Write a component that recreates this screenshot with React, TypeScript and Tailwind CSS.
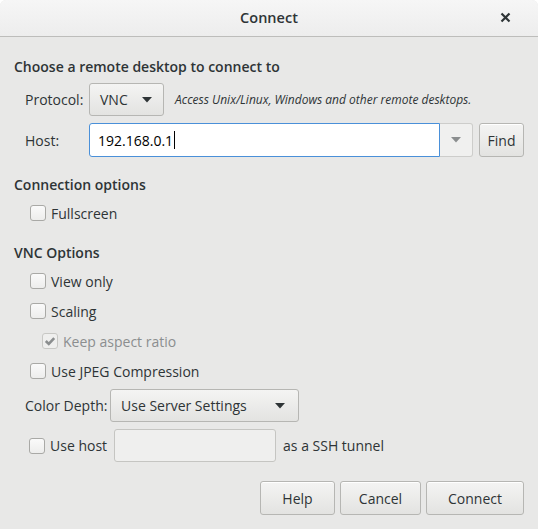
import React from "react";

const font = { fontFamily: '"Open Sans", "Noto Sans", sans-serif' };

function Check({ checked, disabled, label }: { checked?: boolean; disabled?: boolean; label: string }) {
  return (
    <div className={`flex items-center h-[30px] ${disabled ? "text-[#8b8e8f]" : "text-[#2e3436]"}`}>
      <div
        className={`w-[16px] h-[16px] rounded-[3px] border flex items-center justify-center ${
          disabled ? "border-[#c8c8c5] bg-[#efefee]" : "border-[#a9a9a6] bg-gradient-to-b from-[#fafafa] to-[#ededec]"
        }`}
      >
        {checked && (
          <svg width="12" height="12" viewBox="0 0 12 12">
            <path d="M1.8 6 L4.8 9 L10.2 3.2" stroke={disabled ? "#8b8e8f" : "#2e3436"} strokeWidth="2.6" fill="none" />
          </svg>
        )}
      </div>
      <span className="ml-[5px] text-[14px]">{label}</span>
    </div>
  );
}

function Caret() {
  return (
    <svg width="10" height="6" viewBox="0 0 10 6">
      <path d="M0 0 H10 L5 5.5 Z" fill="#2e3436" />
    </svg>
  );
}

function Btn({ children, w }: { children: React.ReactNode; w: string }) {
  return (
    <div
      className={`${w} h-[34px] rounded-[3px] border border-[#b6b6b3] bg-gradient-to-b from-[#f4f4f3] to-[#e3e3e1] shadow-[inset_0_1px_0_#ffffff] flex items-center justify-center text-[14px] text-[#2e3436]`}
    >
      {children}
    </div>
  );
}

export default function App() {
  return (
    <div style={font} className="w-[538px] h-[529px] bg-[#e8e8e7] flex flex-col text-[#2e3436] rounded-t-[6px] overflow-hidden">
      <div className="h-[37px] shrink-0 bg-gradient-to-b from-[#f6f6f6] to-[#ededed] border-b border-[#bdbdbb] flex items-center relative">
        <div className="flex-1 text-center text-[14.5px] font-semibold text-[#2e3436]">Connect</div>
        <div className="absolute right-[27px] top-[12px]">
          <svg width="11" height="11" viewBox="0 0 11 11">
            <path d="M1.5 1.5 L9.5 9.5 M9.5 1.5 L1.5 9.5" stroke="#2e3436" strokeWidth="2.2" />
          </svg>
        </div>
      </div>

      <div className="flex flex-col pl-[14px] pr-[14px]">
        <div className="mt-[20px] h-[20px] leading-[20px] text-[14px] font-semibold">Choose a remote desktop to connect to</div>

        <div className="mt-[6px] flex items-center h-[33px]">
          <span className="ml-[11px] w-[64px] text-[14px]">Protocol:</span>
          <div className="w-[75px] h-[33px] rounded-[3px] border border-[#b6b6b3] bg-gradient-to-b from-[#f4f4f3] to-[#e3e3e1] flex items-center justify-between pl-[10px] pr-[11px] text-[14px]">
            <span>VNC</span>
            <Caret />
          </div>
          <span className="ml-[11px] text-[12px] italic text-[#2e3436]">Access Unix/Linux, Windows and other remote desktops.</span>
        </div>

        <div className="mt-[7px] flex items-center h-[34px]">
          <span className="ml-[11px] w-[64px] text-[14px]">Host:</span>
          <div className="w-[351px] h-[34px] rounded-l-[3px] border border-[#4a90d9] bg-white flex items-center pl-[8px] text-[14px] text-black">
            192.168.0.1<span className="w-px h-[18px] bg-black ml-px" />
          </div>
          <div className="w-[33px] h-[34px] rounded-r-[3px] border border-l-0 border-[#cdcdcb] bg-[#f0f0ef] flex items-center justify-center">
            <svg width="10" height="6" viewBox="0 0 10 6">
              <path d="M0 0 H10 L5 5.5 Z" fill="#8b8e8f" />
            </svg>
          </div>
          <div className="ml-[6px]">
            <Btn w="w-[45px]">Find</Btn>
          </div>
        </div>

        <div className="mt-[18px] h-[20px] leading-[20px] text-[14px] font-semibold">Connection options</div>
        <div className="mt-[3px] pl-[16px]">
          <Check label="Fullscreen" />
        </div>

        <div className="mt-[15px] h-[20px] leading-[20px] text-[14px] font-semibold">VNC Options</div>
        <div className="mt-[3px] pl-[16px] flex flex-col">
          <Check label="View only" />
          <Check label="Scaling" />
          <div className="pl-[12px]">
            <Check label="Keep aspect ratio" checked disabled />
          </div>
          <Check label="Use JPEG Compression" />
        </div>

        <div className="mt-[3px] flex items-center h-[33px]">
          <span className="ml-[11px] w-[85px] text-[14px]">Color Depth:</span>
          <div className="w-[189px] h-[33px] rounded-[3px] border border-[#b6b6b3] bg-gradient-to-b from-[#f4f4f3] to-[#e3e3e1] flex items-center justify-between pl-[10px] pr-[13px] text-[14px]">
            <span>Use Server Settings</span>
            <Caret />
          </div>
        </div>

        <div className="mt-[7px] flex items-center h-[33px] pl-[15px] gap-[7px]">
          <Check label="Use host" />
          <div className="w-[162px] h-[33px] rounded-[3px] border border-[#c5c5c2] bg-[#efefee]" />
          <span className="text-[14px]">as a SSH tunnel</span>
        </div>

        <div className="mt-[19px] flex justify-end gap-[5px]">
          <Btn w="w-[75px]">Help</Btn>
          <Btn w="w-[81px]">Cancel</Btn>
          <Btn w="w-[98px]">Connect</Btn>
        </div>
      </div>
    </div>
  );
}
